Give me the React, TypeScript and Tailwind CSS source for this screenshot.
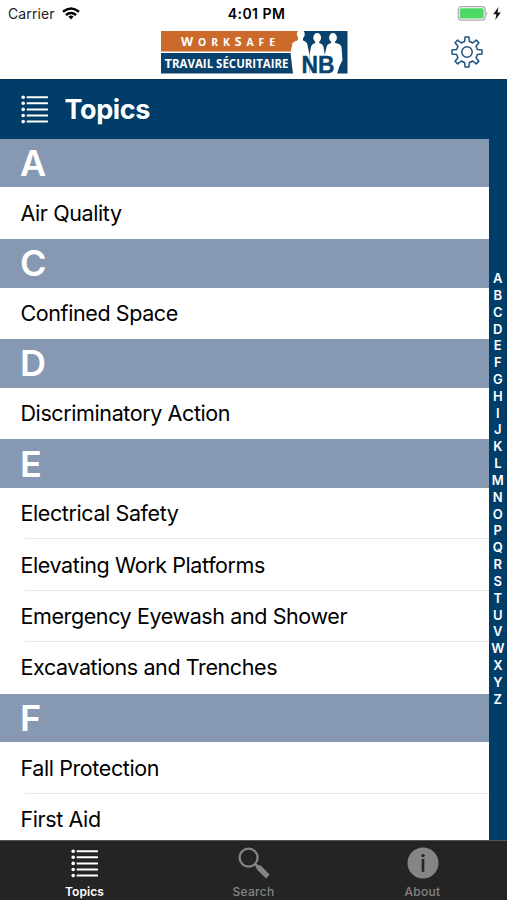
import { useState } from 'react'

const fontCls = "font-['Inter','Liberation_Sans',sans-serif]"

const SECTIONS = [
  { letter: 'A', topics: ['Air Quality'] },
  { letter: 'C', topics: ['Confined Space'] },
  { letter: 'D', topics: ['Discriminatory Action'] },
  {
    letter: 'E',
    topics: ['Electrical Safety', 'Elevating Work Platforms', 'Emergency Eyewash and Shower', 'Excavations and Trenches'],
  },
  { letter: 'F', topics: ['Fall Protection', 'First Aid'] },
]

const ALPHABET = 'ABCDEFGHIJKLMNOPQRSTUVWXYZ'.split('')

type Tab = 'Topics' | 'Search' | 'About'

function ListIcon({ className }: { className?: string }) {
  return (
    <svg viewBox="0 0 28 30" className={className} fill="currentColor">
      {[2.2, 8.3, 14.4, 20.5, 26.6].map(y => (
        <g key={y}>
          <circle cx="2.2" cy={y} r="1.8" />
          <rect x="5.6" y={y - 1} width="21.4" height="2" rx="0.6" />
        </g>
      ))}
    </svg>
  )
}

function SearchIcon() {
  return (
    <svg viewBox="0 0 32 32" className="h-8 w-8">
      <circle cx="10.6" cy="10.6" r="9" fill="none" stroke="currentColor" strokeWidth="2.3" />
      <path d="M16.2 17.8 L17.8 16.2 L20.6 18.2 Q22.4 18 23.6 19.4 L31.6 27.6 L28.2 31.4 L19.6 23.2 Q18.2 22 18.4 20.4 Z" fill="currentColor" />
    </svg>
  )
}

function InfoIcon() {
  return (
    <svg viewBox="0 0 32 32" className="h-8 w-8">
      <circle cx="16" cy="16" r="15.5" fill="currentColor" />
      <circle cx="16" cy="8.6" r="1.7" fill="#242424" />
      <rect x="14.7" y="12" width="2.6" height="12.8" fill="#242424" />
    </svg>
  )
}

// eight flat teeth round a hub, drawn as one outline
function GearIcon() {
  return (
    <svg viewBox="-16 -16 32 32" className="h-8 w-8" fill="none" stroke="#1f5480" strokeWidth="1.5" strokeLinejoin="round">
      <circle r="5.2" />
      <path d="M-2.4 -10.4 L-1.9 -15 H1.9 L2.4 -10.4 Q4 -10 5.7 -9 L9.3 -11.9 L11.9 -9.3 L9 -5.7 Q10 -4 10.4 -2.4 L15 -1.9 V1.9 L10.4 2.4 Q10 4 9 5.7 L11.9 9.3 L9.3 11.9 L5.7 9 Q4 10 2.4 10.4 L1.9 15 H-1.9 L-2.4 10.4 Q-4 10 -5.7 9 L-9.3 11.9 L-11.9 9.3 L-9 5.7 Q-10 4 -10.4 2.4 L-15 1.9 V-1.9 L-10.4 -2.4 Q-10 -4 -9 -5.7 L-11.9 -9.3 L-9.3 -11.9 L-5.7 -9 Q-4 -10 -2.4 -10.4 Z" />
    </svg>
  )
}

function Logo() {
  return (
    <svg viewBox="0 0 188 49" className="h-[49px] w-[188px] font-['Open_Sans','Liberation_Sans',sans-serif]">
      <path d="M0 1 H137 V10 L131.5 13 L130 21.500 H0 Z" fill="#cb6a2a" />
      <path d="M0 23 H129.500 L132 43.500 H0 Z" fill="#0a426e" />
      <path d="M141 1 H186.500 V43.500 H141 Z" fill="#0a426e" />
      <g fill="#fff">
        <ellipse cx="139.800" cy="4.300" rx="3.900" ry="4.600" />
        <path d="M137.500 7 H142 V10.500 Q146 11.500 146.500 15 L148.500 25 V44 H132.500 L130 22 L131.500 14 Q132 11.500 137.500 10.500 Z" />
        <ellipse cx="156.200" cy="7.800" rx="3.900" ry="4.700" />
        <path d="M154.200 11 H158.200 V13 Q162 14 162.500 17 L164 26 V44 H148.500 V25 L150 17 Q150.500 14 154.200 13 Z" />
        <ellipse cx="172" cy="7.800" rx="3.900" ry="4.700" />
        <path d="M170 11 H174 V13 Q179.500 13.500 180.500 17 L181.500 30 L178.500 36 L176 44 H163.500 V26 L165.500 17 Q166 14 170 13 Z" />
      </g>
      <g fontWeight="700">
        <text x="20" y="16.300" fill="#fff" fontSize="12.500" textLength="94"><tspan>W</tspan><tspan fontSize="10.300">ORK</tspan><tspan>S</tspan><tspan fontSize="10.300">AFE</tspan></text>
        <text x="3.500" y="37.500" fill="#fff" fontSize="13" textLength="124" lengthAdjust="spacingAndGlyphs"><tspan>T</tspan><tspan fontSize="11.500">RAVAIL SÉCURITAIRE</tspan></text>
        <text x="140.500" y="42.500" fill="#0a426e" stroke="#0a426e" strokeWidth="0.4" fontSize="23" fontFamily="'Liberation Sans', sans-serif" textLength="33" lengthAdjust="spacingAndGlyphs">NB</text>
      </g>
    </svg>
  )
}

function StatusBar() {
  return (
    <div className="flex h-[27px] items-center justify-between pl-2 pr-1.5">
      <div className="flex w-40 items-center gap-[7px]">
        <span className="text-[14px] tracking-[0.1px] text-[#222]">Carrier</span>
        <svg viewBox="0 0 18 13" className="h-[13px] w-[18px]" fill="none" stroke="#000" strokeWidth="2.4">
          <path d="M1 4.800 Q9 -1.800 17 4.800" />
          <path d="M3.900 8 Q9 3.800 14.100 8" />
          <path d="M6.400 9.600 Q9 7.600 11.600 9.600 L9 12.600 Z" fill="#000" stroke="none" />
        </svg>
      </div>
      <span className="pl-1 text-[14px] font-semibold tracking-[0.45px] text-black">4:01 PM</span>
      <div className="flex w-40 items-center justify-end gap-[5px]">
        <svg viewBox="0 0 32 15" className="h-[15px] w-8">
          <rect x="2.200" y="0.700" width="27" height="13.400" rx="3" fill="#fff" stroke="#aaa" strokeWidth="1.200" />
          <rect x="3.700" y="2.200" width="24" height="10.400" rx="1.600" fill="#4cd964" />
          <path d="M30.300 5 Q32.300 7.400 30.300 9.800 Z" fill="#aaa" />
        </svg>
        <svg viewBox="0 0 8 13" className="h-[13px] w-2">
          <path d="M5.500 0 L0.200 7.200 H3.400 L2.300 13 L7.800 5.400 H4.500 Z" fill="#111" />
        </svg>
      </div>
    </div>
  )
}

export default function App() {
  const [tab, setTab] = useState<Tab>('Topics')

  return (
    <div className={`flex h-[900px] w-[507px] flex-col overflow-hidden bg-white ${fontCls}`}>
      <header className="h-[79px] shrink-0">
        <StatusBar />
        <div className="flex items-start justify-end pr-6 pt-[3px]">
          <Logo />
          <button aria-label="Settings" className="ml-[102px] mt-1.5">
            <GearIcon />
          </button>
        </div>
      </header>

      <div className="flex h-[59.6px] shrink-0 items-center border-t border-[#0b3558] bg-[#003d69] pl-[21px] text-white">
        <ListIcon className="mt-px h-[30px] w-7" />
        <h1 className="ml-[15.5px] pt-0.5 text-[27px] font-bold tracking-[-0.4px]">Topics</h1>
      </div>

      <div className="flex min-h-0 flex-1">
        <main className="flex-1 overflow-hidden">
          {SECTIONS.map(section => (
            <section key={section.letter}>
              <h2 className="flex h-[48.8px] items-center bg-[#8799b2] pl-5 text-[36px] font-semibold text-white">
                {section.letter}
              </h2>
              <ul>
                {section.topics.map((topic, i) => (
                  <li key={topic} className="flex h-[51.4px] flex-col">
                    {i > 0 && <div className="-mt-px ml-[25px] h-px shrink-0 bg-[#e9e9eb]" />}
                    <span className="flex flex-1 items-center pb-[0.6px] pl-[20.5px] text-[21.5px] tracking-[-0.4px] text-black">
                      {topic}
                    </span>
                  </li>
                ))}
              </ul>
            </section>
          ))}
        </main>
        <nav className="flex w-[18.4px] flex-col items-center justify-center bg-[#003d69] pb-px">
          {ALPHABET.map(l => (
            <span key={l} className="h-[16.84px] text-[13px] font-semibold leading-[16.84px] text-white">{l}</span>
          ))}
        </nav>
      </div>

      <footer className="grid h-[60px] shrink-0 grid-cols-3 border-t border-[#555] bg-[#242424]">
        {(['Topics', 'Search', 'About'] as Tab[]).map(name => (
          <button
            key={name}
            onClick={() => setTab(name)}
            className={`flex flex-col items-center pt-1.5 ${tab === name ? 'text-white' : 'text-[#858585]'}`}
          >
            <span className="flex h-8 items-center">
              {name === 'Topics' && <ListIcon className="mt-px h-[30px] w-7" />}
              {name === 'Search' && <SearchIcon />}
              {name === 'About' && <InfoIcon />}
            </span>
            <span className={`mt-[5px] text-[12px] leading-4 ${tab === name ? 'font-semibold tracking-[0.1px]' : 'font-medium tracking-[0.3px]'}`}>{name}</span>
          </button>
        ))}
      </footer>
    </div>
  )
}
